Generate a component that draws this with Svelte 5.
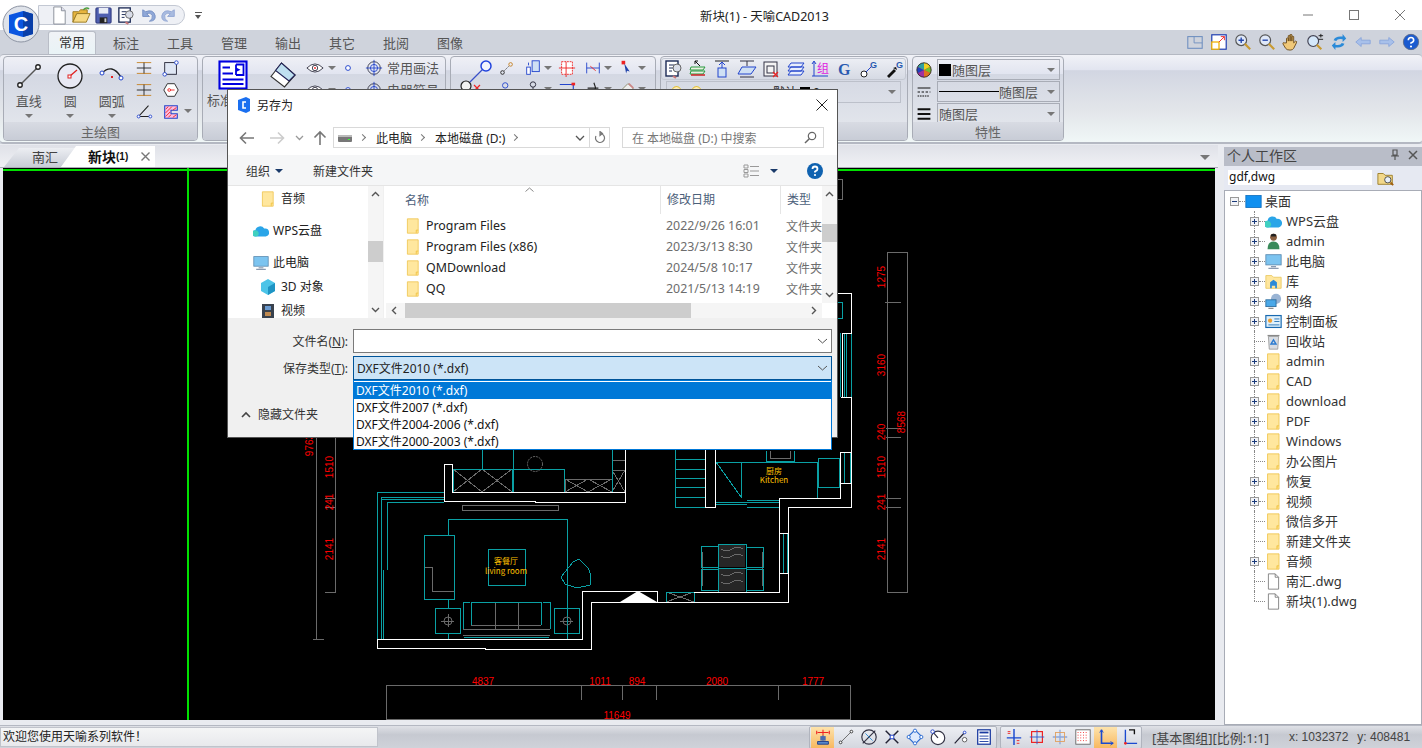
<script lang="ts">
  const icons: Record<string, string> = {
    doc: '<path d="M4 1h8l4 4v14H4z" fill="#fff" stroke="#8a8f9a"/><path d="M12 1v4h4" fill="#dde" stroke="#8a8f9a"/>',
    open: '<path d="M1 6h6l2-2h7v4H5L1 17z" fill="#e8b53e" stroke="#9a7a24"/><path d="M5 8h14l-4 9H1z" fill="#f7d983" stroke="#9a7a24"/><path d="M12 4q3-3 6-1" fill="none" stroke="#4a9e3f" stroke-width="1.5"/>',
    save: '<rect x="2" y="2" width="16" height="16" rx="1" fill="#4f5fb0" stroke="#2a3478"/><rect x="5" y="2" width="10" height="6" fill="#e8ecf6"/><rect x="6" y="12" width="8" height="6" fill="#222"/><rect x="11" y="13" width="2" height="4" fill="#ccc"/>',
    preview: '<rect x="3" y="2" width="12" height="15" fill="#fff" stroke="#1c2a55" stroke-width="1.4"/><path d="M6 6h5M6 9h5M6 12h3" stroke="#1c2a55"/><circle cx="14" cy="9" r="4" fill="#d9dde8" stroke="#666"/><path d="M10 17l3 2" stroke="#c77" stroke-width="2"/>',
    undo: '<path d="M5 4v7h7l-3-3q4-2 6 2 1 4-3 6 7 0 6-6-2-7-10-4z" fill="#8fa8d8" stroke="#7790c4"/>',
    redo: '<path d="M15 4v7H8l3-3q-4-2-6 2-1 4 3 6-7 0-6-6 2-7 10-4z" fill="#a8bbe0" stroke="#93a8d4"/>',
    wheel: '<circle cx="10" cy="10" r="9" fill="#e03030"/><path d="M10 10V1a9 9 0 0 1 8 5z" fill="#f0d020"/><path d="M10 10L18 6a9 9 0 0 1 0 8z" fill="#70c030"/><path d="M10 10l8 4a9 9 0 0 1-8 5z" fill="#e07020"/><path d="M10 10v9a9 9 0 0 1-8-5z" fill="#a030a0"/><path d="M10 10L2 14a9 9 0 0 1 0-8z" fill="#2040c0"/><path d="M10 10L2 6a9 9 0 0 1 8-5z" fill="#30a0a0"/><circle cx="10" cy="10" r="9" fill="none" stroke="#222"/>',
    linetype: '<path d="M2 5h16M2 10h3m2 0h3m2 0h3m2 0h1M2 15h2m1 0h2m1 0h2m1 0h2m1 0h2" stroke="#111" stroke-width="1.4" fill="none"/>',
    lineweight: '<path d="M2 4h16M2 10h16M2 16h16" stroke="#111" stroke-width="2.4" fill="none"/>',
    line: '<path d="M4 16L16 4" stroke="#555" stroke-width=".9"/><circle cx="4" cy="16" r="1.500" fill="#fff" stroke="#222" stroke-width=".9"/><circle cx="16" cy="4" r="1.500" fill="#fff" stroke="#222" stroke-width=".9"/>',
    bigblue: '<rect x="1" y="1" width="18" height="18" fill="#fff" stroke="#0000e0" stroke-width="1.4"/><path d="M3 5h5M3 9h7M3 13h14M3 16h14M12 3v7M12 3h5v7h-5" stroke="#0000e0" stroke-width="1.2" fill="none"/><path d="M12 5l3 1.5-3 1.5z" fill="#0000e0"/>',
    band: '<path d="M2 11l7-9 9 8-7 8z" fill="#fff" stroke="#333" stroke-width=".8"/><path d="M5 7l4-5 9 8-4 4z" fill="#bfe0f0" stroke="#225" stroke-width=".8"/>',
    eye: '<path d="M1 10q9-9 18 0-9 9-18 0z" fill="#fff" stroke="#334"/><circle cx="10" cy="10" r="3" fill="none" stroke="#334"/><circle cx="10" cy="10" r="1" fill="#e22"/>',
    dot: '<circle cx="10" cy="10" r="3" fill="#fff" stroke="#2244cc" stroke-width="1.2"/>',
    target: '<circle cx="10" cy="10" r="7" fill="none" stroke="#334"/><circle cx="10" cy="10" r="4" fill="none" stroke="#2244cc"/><path d="M1 10h18M10 1v18" stroke="#2244cc"/>',
    dimh: '<path d="M2 4h16M2 16h16" stroke="#c58020" stroke-width="1"/><path d="M2 10h16M10 4v12" stroke="#222"/>',
    rectn: '<rect x="3" y="4" width="13" height="13" fill="#dfe6f4" stroke="#223"/><circle cx="16" cy="4" r="2" fill="#fff" stroke="#2244cc"/><circle cx="3" cy="17" r="2" fill="#fff" stroke="#2244cc"/>',
    hex: '<path d="M6 3h8l4 7-4 7H6l-4-7z" fill="#fff" stroke="#222"/><circle cx="8" cy="10" r="1.5" fill="none" stroke="#e22"/><path d="M9 10h5" stroke="#e22"/>',
    angle: '<path d="M15 3L4 15h13" fill="none" stroke="#222" stroke-width="1.2"/><circle cx="4" cy="15" r="1.6" fill="#fff" stroke="#2244cc"/><circle cx="17" cy="15" r="1.6" fill="#fff" stroke="#2244cc"/>',
    hatch: '<path d="M3 3h14v5h-7v4h7v5H3z" fill="#fbd" stroke="#2244cc" stroke-width="1.2"/><path d="M4 7l3-3M4 11l7-7M4 15l5-5M7 16l3-3M12 16l4-3M12 8l4-3" stroke="#e22"/>',
    seg: '<circle cx="5" cy="15" r="2" fill="none" stroke="#222"/><path d="M7 13l5-5" stroke="#555" stroke-dasharray="2 1"/><circle cx="14" cy="6" r="2" fill="none" stroke="#c58020"/>',
    boxes: '<rect x="9" y="2" width="8" height="12" fill="#cfe0f4" stroke="#2244cc"/><rect x="3" y="9" width="4" height="8" fill="#fff" stroke="#2244cc"/><path d="M5 4v3" stroke="#2244cc"/>',
    redbox: '<rect x="4" y="3" width="12" height="14" fill="#fff" stroke="#e22" stroke-dasharray="2 1"/><path d="M1 10h18M9 3v17" stroke="#e22"/>',
    hdim: '<path d="M3 4v12M17 4v12M3 10h14" stroke="#2244cc"/><path d="M7 8l6 5" stroke="#e22"/>',
    pen: '<rect x="4" y="2" width="4" height="4" fill="#e22"/><path d="M7 5l6 9-3-1-1 3z" fill="#2244aa"/>',
    person: '<circle cx="8" cy="6" r="3" fill="none" stroke="#2244cc"/><path d="M4 17v-6h8v6M14 11v6" stroke="#2244cc" fill="none"/>',
    nodes: '<circle cx="10" cy="5" r="3" fill="none" stroke="#223"/><circle cx="4" cy="15" r="3" fill="none" stroke="#2244cc"/><circle cx="16" cy="15" r="3" fill="none" stroke="#2244cc"/><path d="M10 8v4M4 12h12" stroke="#223"/>',
    corner: '<path d="M2 5h15v12" fill="none" stroke="#2244cc" stroke-width="1.300"/><rect x="15" y="3" width="4" height="3" fill="#e22"/>',
    pick: '<path d="M11 3l2 6-4 8M4 9h12" fill="none" stroke="#222" stroke-width="1.300"/>',
    erase: '<path d="M3 12l8-8 6 5-8 8z" fill="#eee" stroke="#886"/><path d="M12 4l5 5" stroke="#c88" stroke-width="2"/>',
    layer: '<path d="M7 2l5 5M7 2v3M7 2h3" stroke="#111"/><path d="M3 8l14 0-2 3H2zM3 12h14l-2 3H2z" fill="#e8f0e0" stroke="#2a9a40"/><path d="M3 16h14" stroke="#c22" stroke-width="1.4"/>',
    upbox: '<path d="M3 2h14" stroke="#222"/><path d="M10 3v6M7 6l3-3 3 3" fill="none" stroke="#2244cc"/><rect x="6" y="9" width="8" height="9" fill="#cfe0f4" stroke="#2244cc"/>',
    plate: '<path d="M3 2h14M10 2v5M3 18h14" stroke="#334"/><path d="M5 8h14l-5 7H1z" fill="#cfe0f4" stroke="#2244cc"/>',
    boxx: '<rect x="3" y="3" width="13" height="14" fill="#f4f4f4" stroke="#334"/><rect x="6" y="7" width="7" height="7" fill="none" stroke="#334"/><path d="M12 13l5 5m0-5l-5 5" stroke="#e22" stroke-width="1.2"/>',
    stack: '<path d="M5 4h13l-3 4H2zM5 8h13l-3 4H2zM5 12h13l-3 4H2z" fill="#e8eefc" stroke="#2244cc"/>',
    zu: '<path d="M4 17V3M2 5l2-3 2 3M2 17h16" stroke="#2244cc" fill="none"/><text x="7" y="14" font-size="12" fill="#e020e0" font-family="Noto Sans CJK SC">组</text>',
    g: '<text x="3" y="16" font-size="16" font-weight="700" fill="#2a5ab0" font-family="Liberation Serif">G</text>',
    gline: '<circle cx="5" cy="15" r="3" fill="#fff" stroke="#222"/><path d="M7 13l5-5" stroke="#2244cc"/><text x="11" y="9" font-size="9" font-weight="700" fill="#2a5ab0" font-family="Liberation Sans">G</text>',
    gdrop: '<path d="M3 17l7-7 2 2-7 7z" fill="#111"/><path d="M9 9l3-1 1 3z" fill="#111"/><text x="12" y="9" font-size="9" font-weight="700" fill="#2a5ab0" font-family="Liberation Sans">G</text>',
    layout: '<rect x="2" y="4" width="16" height="13" fill="none" stroke="#6f8fc0" stroke-width="1.2"/><path d="M9 4v7h9" fill="none" stroke="#6f8fc0"/>',
    fit: '<rect x="2" y="2" width="16" height="16" fill="#fff" stroke="#1a3ab0" stroke-width="1.3"/><rect x="2" y="10" width="8" height="8" fill="#fff" stroke="#f0b000" stroke-width="1.4"/><path d="M10 10l6-6M12 4h4v4" fill="none" stroke="#e22"/>',
    zoomin: '<circle cx="8" cy="8" r="6" fill="#dfe8f8" stroke="#555" stroke-width="1.3"/><path d="M5 8h6M8 5v6" stroke="#2244aa" stroke-width="1.5"/><path d="M12 12l6 6" stroke="#c89a30" stroke-width="2.4"/>',
    zoomout: '<circle cx="8" cy="8" r="6" fill="#dfe8f8" stroke="#555" stroke-width="1.3"/><path d="M5 8h6" stroke="#2244aa" stroke-width="1.5"/><path d="M12 12l6 6" stroke="#c89a30" stroke-width="2.4"/>',
    hand: '<path d="M5 11V6q1-1 2 0v3V3q1-1 2 0v6V2q1-1 2 0v7V4q1-1 2 0v7l2-2q2 0 1 2l-3 6q-1 2-4 2-4 0-5-2l-3-5q0-2 2-1z" fill="#f0c878" stroke="#6a4a1a"/>',
    zoompm: '<circle cx="8" cy="9" r="6" fill="#d5e8fa" stroke="#445" stroke-width="1.3"/><path d="M12 13l5 5" stroke="#c89a30" stroke-width="2.4"/><path d="M14 3h5M16.500 1v4M14 7h5" stroke="#111"/>',
    refresh: '<path d="M4 8q2-5 10-4V1l4 5-4 4V7q-6-1-7 2z" fill="#2a8ad8"/><path d="M16 12q-2 5-10 4v3l-4-5 4-4v3q6 1 7-2z" fill="#2a8ad8"/>',
    left: '<path d="M2 10l6-5v3h10v4H8v3z" fill="#a8c0ea" stroke="#8aa6dc"/>',
    right: '<path d="M18 10l-6-5v3H2v4h10v3z" fill="#a8c0ea" stroke="#8aa6dc"/>',
    help: '<circle cx="10" cy="10" r="8.500" fill="#1a5ad0" stroke="#5a6a8a"/><path d="M7 8q0-3 3-3t3 3q0 2-3 3v1" fill="none" stroke="#fff" stroke-width="1.8"/><circle cx="10" cy="15" r="1.200" fill="#fff"/>',
    folderfind: '<path d="M1 5h6l2 2h8v10H1z" fill="#f2d88a" stroke="#9a7a24"/><circle cx="12" cy="12" r="3.500" fill="#e8f0fa" stroke="#444"/><path d="M15 15l3 3" stroke="#a06010" stroke-width="2"/>',
    folder: '<path d="M3 1h13.500v18H3z" fill="#ffe79e" stroke="#efc44c"/><path d="M14 19v-4h2.500" fill="#ffd864" stroke="#efc44c"/>',
    file: '<path d="M4 1h8l4 4v14H4z" fill="#fff" stroke="#777"/><path d="M12 1v4h4" fill="none" stroke="#777"/>',
    desktop: '<rect x="1" y="3" width="18" height="14" fill="#1090f0" stroke="#1070c0"/>',
    cloud: '<path d="M3 17a4 4 0 0 1 0-8 6 6 0 0 1 11-2 5 5 0 0 1 2 10z" fill="#2aa5e8"/><path d="M3 17a4 4 0 0 1 0-8q3 0 4 3 1 5-4 5z" fill="#40d0c0"/>',
    user: '<circle cx="10" cy="5" r="4" fill="#8a6040"/><path d="M7 2q3-2 6 0v2H7z" fill="#222"/><path d="M3 19q0-9 7-9t7 9z" fill="#3a8a5a"/>',
    pc: '<rect x="1" y="2" width="18" height="12" fill="#7cc4f0" stroke="#5a8ab0"/><path d="M7 16h6M4 18h12" stroke="#8a9ab0" stroke-width="1.4"/>',
    lib: '<path d="M1 3h7l2 2h9v13H1z" fill="#ffe79e" stroke="#e8c860"/><path d="M6 18v-7l4-3 4 3v7h-2v-3H8v3z" fill="#2a8ad8"/>',
    net: '<circle cx="13" cy="7" r="6" fill="#9ab4d4"/><rect x="1" y="8" width="12" height="8" fill="#4aa8e8" stroke="#2a6a9a"/><path d="M4 18h6" stroke="#555"/>',
    panel: '<rect x="1" y="3" width="18" height="14" fill="#dff0fb" stroke="#1a6ab0" stroke-width="1.4"/><circle cx="6" cy="9" r="2.500" fill="#f0a030"/><path d="M11 7h6M11 10h6M4 14h13" stroke="#1a6ab0"/>',
    bin: '<path d="M4 4h12l-1 15H5z" fill="#d8dce2" stroke="#999"/><path d="M3 3h14" stroke="#888" stroke-width="1.500"/><path d="M10 8l3 5H7z" fill="none" stroke="#2a7ad0" stroke-width="1.600"/>',
    stMark: '<path d="M10 2v6M4 5h12M3 3v4M17 3v4" stroke="#e22" stroke-width="1.200"/><path d="M10 8v6M4 15h12v3H4z" fill="#5a88c8" stroke="#1a3a8a"/><rect x="7" y="9" width="6" height="5" fill="#4a6ab0"/>',
    stPolar: '<circle cx="10" cy="10" r="8" fill="none" stroke="#334" stroke-width="1.300"/><path d="M3 17L17 3" stroke="#334" stroke-width="1.300"/><path d="M6 6l8 8" stroke="#2a8ad8"/>',
    stCross: '<path d="M3 3l14 14M17 3L3 17" stroke="#223" stroke-width="1.600"/><rect x="8" y="8" width="4" height="4" fill="#fff" stroke="#2244cc"/>',
    stDiamond: '<path d="M10 2l8 8-8 8-8-8z" fill="#dfeafc" stroke="#2a6ad0" stroke-width="1.200"/><circle cx="10" cy="3" r="1.800" fill="#fff" stroke="#2a6ad0"/><circle cx="17" cy="10" r="1.800" fill="#fff" stroke="#2a6ad0"/><circle cx="10" cy="17" r="1.800" fill="#fff" stroke="#2a6ad0"/><circle cx="3" cy="10" r="1.800" fill="#fff" stroke="#2a6ad0"/>',
    stClock: '<circle cx="10" cy="11" r="7.500" fill="#fff" stroke="#334" stroke-width="1.300"/><path d="M3 3l7 8" stroke="#334" stroke-width="1.300"/><circle cx="4" cy="4" r="2" fill="#fff" stroke="#2244cc"/>',
    stNode: '<path d="M3 17L14 5" stroke="#223" stroke-width="1.300"/><circle cx="14" cy="13" r="2.500" fill="#fff" stroke="#555"/><circle cx="14" cy="5" r="1.500" fill="#fff" stroke="#2244cc"/>',
    stForm: '<rect x="3" y="2" width="14" height="16" fill="#fff" stroke="#1a3aa0" stroke-width="1.400"/><rect x="5" y="4" width="10" height="2" fill="#1a3aa0"/><path d="M5 9h10M5 12h10M5 15h10" stroke="#1a3aa0"/>',
    st12: '<path d="M10 1v18M2 11h16" stroke="#1a4ad0" stroke-width="1.600"/><path d="M3 4h3M3 6h3M13 14h3M13 17h3" stroke="#e22"/>',
    stGrid: '<rect x="4" y="4" width="12" height="12" fill="none" stroke="#e22" stroke-width="1.300"/><path d="M10 2v16M2 10h16" stroke="#2a5ad0"/>',
    stFaint: '<path d="M10 2v16M2 10h16" stroke="#8aa6dc" stroke-width="1.400"/><rect x="5" y="5" width="10" height="10" fill="none" stroke="#e0a060"/>',
    stDots: '<rect x="2" y="2" width="16" height="16" fill="#fff" stroke="#666"/><path d="M4 5h12M4 8h12M4 11h12M4 14h12" stroke="#e22" stroke-dasharray="1 2"/>',
    stOrtho: '<path d="M5 2v15h13" fill="none" stroke="#1a4ad0" stroke-width="1.800"/><path d="M3 5l2-3 2 3M15 15l3 2-3 2" fill="none" stroke="#1a4ad0"/>',
    stOrthoX: '<path d="M6 2v15h13" fill="none" stroke="#1a4ad0" stroke-width="1.500"/><path d="M10 2h6v5" fill="none" stroke="#111" stroke-width="1.500"/><circle cx="6" cy="17" r="1.500" fill="#e22"/>'
  };

  const drawColA = ['dimh', 'dimh', 'angle'];
  const drawColB = ['rectn', 'hex', 'hatch'];
  const editRows = [
    [['seg', false], ['boxes', true], ['redbox', false], ['hdim', true], ['pen', true]],
    [['person', false], ['nodes', true], ['corner', false], ['pick', true], ['erase', true]]
  ] as [string, boolean][][];
  const propIcons = ['preview', 'layer', 'upbox', 'plate', 'boxx', 'stack', 'zu', 'g', 'gline', 'gdrop'];
  const viewIcons = ['layout', 'fit', 'zoomin', 'zoomout', 'hand', 'zoompm', 'refresh', 'left', 'right', 'help'];
  const ribbonTabs = ['常用', '标注', '工具', '管理', '输出', '其它', '批阅', '图像'];
  const quick = ['doc', 'open', 'save', 'preview', 'undo', 'redo'];
  const statusA = ['stMark', 'line', 'stPolar', 'stCross', 'stDiamond', 'stClock', 'stNode', 'stForm'];
  const statusB = ['st12', 'stGrid', 'stFaint', 'stDots', 'stOrtho', 'stOrthoX'];

  const treeRows = [
    { label: 'WPS云盘', icon: 'cloud', exp: true },
    { label: 'admin', icon: 'user', exp: true },
    { label: '此电脑', icon: 'pc', exp: true },
    { label: '库', icon: 'lib', exp: true },
    { label: '网络', icon: 'net', exp: true },
    { label: '控制面板', icon: 'panel', exp: true },
    { label: '回收站', icon: 'bin', exp: false },
    { label: 'admin', icon: 'folder', exp: true },
    { label: 'CAD', icon: 'folder', exp: true },
    { label: 'download', icon: 'folder', exp: true },
    { label: 'PDF', icon: 'folder', exp: true },
    { label: 'Windows', icon: 'folder', exp: true },
    { label: '办公图片', icon: 'folder', exp: false },
    { label: '恢复', icon: 'folder', exp: true },
    { label: '视频', icon: 'folder', exp: true },
    { label: '微信多开', icon: 'folder', exp: false },
    { label: '新建文件夹', icon: 'folder', exp: false },
    { label: '音频', icon: 'folder', exp: true },
    { label: '南汇.dwg', icon: 'file', exp: false },
    { label: '新块(1).dwg', icon: 'file', exp: false }
  ];

  const fileRows = [
    { name: 'Program Files', date: '2022/9/26 16:01' },
    { name: 'Program Files (x86)', date: '2023/3/13 8:30' },
    { name: 'QMDownload', date: '2024/5/8 10:17' },
    { name: 'QQ', date: '2021/5/13 14:19' }
  ];

  const saveTypes = ['DXF文件2010 (*.dxf)', 'DXF文件2007 (*.dxf)', 'DXF文件2004-2006 (*.dxf)', 'DXF文件2000-2003 (*.dxf)'];

  // plan geometry, in page coordinates (the svg viewBox starts where the canvas does)
  const walls = 'M444 464H452V492H625V450M444 464V501H535V502H625V492M377 639H582V591H657M377 639V648H485V649H591V602H620M657 591V602H620M657 602H694M694 592H779V573H788V602H694M779 573V533H788V573M779 533V498H840V483H851V397H841M851 397V507H788V533M840 483V452H851M851 293V333H842M837 293H851M705 450V507H715V450M842 397V333';
  const teal = 'M377 492H444M377 492V639H447M381 497H444M381 499H444M381 497V639M383 570V639M387 502H444M387 502V570M447 639H567V519H448V535M424 535H454V599H424ZM448 599V608M435 608H460V633H435ZM554 608H579V633H554ZM448 633V639M567 633V639M488 549H525V585H488ZM471 602H541V625M471 602V625M463 602H470M463 602V629M543 602H550V629M464 637H549M579 559L588 568L591 575L590 585L577 588L565 584L561 577L573 562ZM453 492V469H512V492M513 450V492M482 450V469M513 469H564V492M612 450V492M625 450V492M675 450V507H705M675 459H705M675 469H705M675 478H705M675 487H705M675 497H705M715 462H817V498M741 462V498M716 462L741 497M715 502H779M715 504H747M747 500H779M747 507H779M818 458H839V487H818ZM844 452V483M850 452V483M844 333V397M846 333V397M851 333V397M840 333V397M837 302H842V318H837M718 544H746V592H718ZM718 568H746M701 546H718V567H701ZM701 569H718V590H701ZM746 547H763V567H746ZM746 569H763V590H746ZM666 592H694V602H666ZM779 533V573M783 533V573M787 533V573M766 451V461H794V451';
  const grey = 'M424 567H432V591H454M471 625H541M471 629H541M495 602V629M518 602V629M463 629H550M463 635H550M462 505H558V510H462ZM453 469L482 492M482 469L453 492M482 469L512 492M512 469L482 492M565 479H612V492H565ZM565 479L588 492M588 479L565 492M588 479L612 492M612 479L588 492M612 460H625M612 470H625M612 470L625 492M625 470L612 492M666 592L694 602M694 592L666 602M386 685H850V719H386ZM581 685V700M622 685V700M656 685V700M778 685V700M316 437V639M313 639H324M335 437V592H325M325 437H335M325 498H335M325 507H335M887 252V592H907V252H887M885 302H901M886 428H901M886 437H901M886 498H901M886 507H901M837 179H842V199H837M702 552V586M762 552V586M441 621H454M448 614V627M560 621H573M567 614V627M770 451V458H790V451M721 549Q727 553 732 549T743 549M721 556Q727 560 732 556T743 556M721 574Q727 578 732 574T743 574M721 582Q727 586 732 582T743 582';
  const dimTexts = [
    { t: '4837', x: 483, y: 685 }, { t: '1011', x: 600, y: 685 }, { t: '894', x: 637, y: 685 },
    { t: '2080', x: 717, y: 685 }, { t: '1777', x: 813, y: 685 }, { t: '11649', x: 617, y: 719 }
  ];
  const dimTextsV = [
    { t: '9763', x: 313, y: 445 }, { t: '1510', x: 333, y: 467 }, { t: '241', x: 333, y: 502 }, { t: '2141', x: 333, y: 549 },
    { t: '1275', x: 885, y: 277 }, { t: '3160', x: 885, y: 365 }, { t: '240', x: 885, y: 432 }, { t: '8568', x: 905, y: 422 },
    { t: '1510', x: 885, y: 467 }, { t: '241', x: 885, y: 502 }, { t: '2141', x: 885, y: 549 }
  ];
</script>

{#snippet ico(name: string, size = 20)}
  <svg class="ico" width={size} height={size} viewBox="0 0 20 20">{@html icons[name]}</svg>
{/snippet}

<div class="app">
  <header class="titlebar">
    <svg class="logo" width="38" height="38" viewBox="0 0 38 38">
      <circle cx="19" cy="19" r="18" fill="#dfe3ea" stroke="#8d94a3" />
      <path d="M7 10l14-4 10 3v20l-10 3-14-4z" fill="#0a55e0" />
      <path d="M21 6l10 3v20l-10 3z" fill="#0a3fa8" />
      <text x="19" y="26" text-anchor="middle" class="logo-c">C</text>
    </svg>
    <div class="quick">
      {#each quick as q}
        <span class="quick-item">{@render ico(q, 19)}</span>
      {/each}
    </div>
    <span class="quick-more"></span>
    <div class="app-title">新块(1) - 天喻CAD2013</div>
    <div class="win-btns">
      <svg width="12" height="12" viewBox="0 0 12 12"><path d="M1 6h10" stroke="#777" /></svg>
      <svg width="12" height="12" viewBox="0 0 12 12"><rect x="1.500" y="1.500" width="9" height="9" fill="none" stroke="#777" /></svg>
      <svg width="12" height="12" viewBox="0 0 12 12"><path d="M1 1l10 10M11 1L1 11" stroke="#777" /></svg>
    </div>
  </header>

  <nav class="tabs">
    {#each ribbonTabs as tab, i}
      <div class="tab" class:active={i === 0}>{tab}</div>
    {/each}
    <div class="view-tools">
      {#each viewIcons as v}
        <span class="view-tool">{@render ico(v, 18)}</span>
      {/each}
    </div>
  </nav>

  <section class="ribbon">
    <div class="group g-draw">
      <div class="group-body">
        <div class="big-btn">{@render ico('line', 30)}<span>直线</span><i class="tri"></i></div>
        <div class="big-btn">
          <svg class="ico" width="30" height="30" viewBox="0 0 30 30">
            <circle cx="15" cy="15" r="12" fill="#e8e9f4" stroke="#222" stroke-width="1.300" />
            <path d="M15 15l7-6" stroke="#e02020" stroke-width="1.300" />
            <rect x="13" y="14" width="3" height="3" fill="#fff" stroke="#e02020" />
          </svg>
          <span>圆</span><i class="tri"></i>
        </div>
        <div class="big-btn">
          <svg class="ico" width="30" height="30" viewBox="0 0 30 30">
            <path d="M5 12q10-10 19 4" fill="none" stroke="#222" stroke-width="1.300" />
            <circle cx="5" cy="12" r="2" fill="#fff" stroke="#2244cc" />
            <circle cx="24" cy="17" r="2" fill="#fff" stroke="#2244cc" />
            <rect x="14" y="15" width="2" height="2" fill="#e02020" />
          </svg>
          <span>圆弧</span><i class="tri"></i>
        </div>
        <div class="small-col first">
          {#each drawColA as a}<span>{@render ico(a, 18)}</span>{/each}
        </div>
        <div class="small-col">
          {#each drawColB as b}<span>{@render ico(b, 18)}</span>{/each}
        </div>
        <i class="tri side-tri"></i>
      </div>
      <div class="group-label">主绘图</div>
    </div>

    <div class="group g-std">
      <div class="group-body">
        <div class="big-btn std">{@render ico('bigblue', 30)}<span>标准图框</span></div>
        <div class="big-btn band">{@render ico('band', 30)}</div>
        <div class="std-rows">
          {#each ['常用画法', '电器符号'] as label}
            <div class="std-row">
              {@render ico('eye', 18)}<i class="tri"></i>{@render ico('dot', 16)}<b class="spacer"></b>{@render ico('target', 18)}<span>{label}</span>
            </div>
          {/each}
        </div>
      </div>
      <div class="group-label"></div>
    </div>

    <div class="group g-edit">
      <div class="group-body">
        <div class="edit-big">
          <svg width="34" height="34" viewBox="0 0 34 34">
            <circle cx="6" cy="27" r="5" fill="#f2f2f2" stroke="#222" stroke-width="1.200" />
            <path d="M10 23L24 9" stroke="#3a50c8" stroke-width="1.300" />
            <circle cx="26" cy="7" r="5" fill="#f2f4fc" stroke="#2244dd" stroke-width="1.500" />
            <path d="M14 26l6 6m0-6l-6 6" stroke="#e22" stroke-width="1.200" />
          </svg>
        </div>
        <div class="edit-grid">
          {#each editRows as row}
            <div class="edit-row">
              {#each row as [name, arrow]}
                <span class="edit-cell" class:wide={arrow}>{@render ico(name, 18)}{#if arrow}<i class="tri"></i>{/if}</span>
              {/each}
            </div>
          {/each}
        </div>
      </div>
      <div class="group-label"></div>
    </div>

    <div class="group g-prop">
      <div class="group-body prop-col">
        <div class="prop-bar">
          {#each propIcons as p}<span>{@render ico(p, 20)}</span>{/each}
        </div>
        <div class="layer-combo">
          <span class="bulb"></span><span class="bulb key"></span>
          <span class="layer-name">默认</span><b class="swatch"></b><span>0</span>
          <i class="tri"></i>
        </div>
      </div>
      <div class="group-label"></div>
    </div>

    <div class="group g-attr">
      <div class="group-body attr-col">
        <div class="attr-row">{@render ico('wheel', 16)}<div class="combo"><b class="swatch big"></b>随图层<i class="tri"></i></div></div>
        <div class="attr-row">{@render ico('linetype', 16)}<div class="combo"><span class="rule"></span>随图层<i class="tri"></i></div></div>
        <div class="attr-row">{@render ico('lineweight', 16)}<div class="combo">随图层<i class="tri"></i></div></div>
      </div>
      <div class="group-label">特性</div>
    </div>
  </section>

  <main class="work">
    <div class="doc">
      <div class="doc-tabs">
        <div class="doc-tab">南汇</div>
        <div class="doc-tab current">
          新块<small>(1)</small>
          <svg class="doc-x" width="9" height="9" viewBox="0 0 9 9"><path d="M.5.500l8 8M8.500.500l-8 8" stroke="#777" stroke-width="1.400" /></svg>
        </div>
        <i class="doc-more"></i>
      </div>
      <div class="canvas">
        <svg class="plan" viewBox="3 168 1212 552" width="1212" height="552">
          <g shape-rendering="crispEdges">
            <path d="M3 170H1215M188 168V720" stroke="#00e000" stroke-width="2" fill="none" />
            <rect x="719" y="545" width="26" height="22" fill="#262626" />
            <rect x="719" y="569" width="26" height="22" fill="#262626" />
            <path d={grey} stroke="#6a6a6a" fill="none" />
            <path d={teal} stroke="#0aa0a4" fill="none" />
            <path d={walls} stroke="#fff" fill="none" />
          </g>
          <path d="M620 602L638 591L657 602Z" fill="#fff" />
          <circle cx="535" cy="464" r="7.500" fill="none" stroke="#6a6a6a" stroke-dasharray="2 1" />
          <circle cx="448" cy="621" r="4" fill="none" stroke="#6a6a6a" />
          <circle cx="567" cy="621" r="4" fill="none" stroke="#6a6a6a" />
          {#each dimTexts as d}
            <text x={d.x} y={d.y} class="dim" text-anchor="middle">{d.t}</text>
          {/each}
          {#each dimTextsV as d}
            <text x={d.x} y={d.y} class="dim" text-anchor="middle" transform="rotate(-90 {d.x} {d.y})">{d.t}</text>
          {/each}
          <text x="506" y="564" class="room" text-anchor="middle">客餐厅</text>
          <text x="506" y="574" class="room" text-anchor="middle">living room</text>
          <text x="774" y="474" class="room" text-anchor="middle">厨房</text>
          <text x="774" y="483" class="room" text-anchor="middle">Kitchen</text>
        </svg>
      </div>
    </div>

    <aside class="side">
      <div class="side-head">
        <span>个人工作区</span>
        <div class="side-btns">
          <svg width="12" height="12" viewBox="0 0 12 12"><path d="M4 1h4v5H4zM2 7h8M6 7v4" fill="none" stroke="#555" stroke-width="1.200" /></svg>
          <svg width="12" height="12" viewBox="0 0 12 12"><path d="M2 2l8 8M10 2l-8 8" stroke="#555" stroke-width="1.500" /></svg>
        </div>
      </div>
      <div class="side-search">
        <div class="side-input">gdf,dwg</div>
        {@render ico('folderfind', 18)}
      </div>
      <div class="tree">
        <div class="tree-root">
          <span class="exp minus"></span><span class="dots"></span>
          {@render ico('desktop', 17)}
          <span>桌面</span>
        </div>
        {#each treeRows as row, i}
          <div class="tree-row" class:last={i === treeRows.length - 1}>
            {#if row.exp}<span class="exp"></span>{:else}<span class="exp none"></span>{/if}
            <span class="dots"></span>
            <span class="tree-ico">{@render ico(row.icon, 17)}</span>
            <span>{row.label}</span>
          </div>
        {/each}
      </div>
    </aside>
  </main>

  <footer class="status">
    <div class="status-msg">欢迎您使用天喻系列软件！</div>
    <div class="status-group s-a">
      {#each statusA as s, i}
        <span class="status-btn" class:on={i === 0}>{@render ico(s, 18)}</span>
      {/each}
    </div>
    <div class="status-group">
      {#each statusB as s, i}
        <span class="status-btn" class:on={i === 4}>{@render ico(s, 18)}</span>
      {/each}
    </div>
    <div class="status-scale">[基本图组][比例:1:1]</div>
    <div class="status-xy"><span>x: 1032372</span><span>y: 408481</span></div>
  </footer>

  <div class="dialog">
    <div class="dlg-title">
      <svg width="14" height="16" viewBox="0 0 14 16">
        <path d="M1 3l8-3 4 2v12l-4 2-8-3z" fill="#1a6ff0" />
        <path d="M9 5H6v6h3" fill="none" stroke="#fff" stroke-width="1.600" />
      </svg>
      <span>另存为</span>
      <svg class="dlg-close" width="12" height="12" viewBox="0 0 12 12"><path d="M.5.500l11 11M11.500.500l-11 11" stroke="#222" /></svg>
    </div>

    <div class="dlg-nav">
      <svg width="16" height="14" viewBox="0 0 16 14"><path d="M15 7H2M7 1.500L1.500 7 7 12.500" fill="none" stroke="#777" stroke-width="1.600" /></svg>
      <svg class="fwd" width="16" height="14" viewBox="0 0 16 14"><path d="M1 7h13M9 1.500L14.500 7 9 12.500" fill="none" stroke="#ccc" stroke-width="1.600" /></svg>
      <svg class="drop" width="9" height="6" viewBox="0 0 9 6"><path d="M1 1l3.500 3.500L8 1" fill="none" stroke="#999" stroke-width="1.300" /></svg>
      <svg class="up" width="14" height="16" viewBox="0 0 14 16"><path d="M7 15V2M1.500 7.500L7 2l5.500 5.500" fill="none" stroke="#777" stroke-width="1.600" /></svg>
      <div class="address">
        <svg width="16" height="10" viewBox="0 0 16 10"><rect x="1" y="2" width="14" height="7" rx="1" fill="#777" /><rect x="1" y="2" width="14" height="2" fill="#bbb" /><rect x="11" y="6" width="2" height="1" fill="#3f3" /></svg>
        <i class="crumb"></i><span>此电脑</span><i class="crumb"></i><span>本地磁盘 (D:)</span><i class="crumb"></i>
        <svg class="addr-down" width="10" height="6" viewBox="0 0 10 6"><path d="M1 1l4 4 4-4" fill="none" stroke="#555" stroke-width="1.300" /></svg>
        <div class="addr-refresh">
          <svg width="12" height="13" viewBox="0 0 12 13"><path d="M6 2.500a4.500 4.500 0 1 1-4 2.500M6 .500v4l2.500-2z" fill="none" stroke="#777" stroke-width="1.200" /></svg>
        </div>
      </div>
      <div class="dlg-search">
        <span>在 本地磁盘 (D:) 中搜索</span>
        <svg width="13" height="13" viewBox="0 0 13 13"><circle cx="8" cy="5" r="3.700" fill="none" stroke="#666" stroke-width="1.200" /><path d="M5.300 7.700L1 12" stroke="#666" stroke-width="1.500" /></svg>
      </div>
    </div>

    <div class="dlg-bar">
      <span class="org">组织</span><i class="dark-tri"></i>
      <span class="newdir">新建文件夹</span>
      <div class="bar-right">
        <svg width="17" height="14" viewBox="0 0 17 14"><path d="M1 1h4v3H1zM1 5.500h4v3H1zM1 10h4v3H1z" fill="none" stroke="#999" /><path d="M7 2.500h9M7 7h9M7 11.500h9" stroke="#999" /></svg>
        <i class="dark-tri"></i>
        <svg class="dlg-help" width="16" height="16" viewBox="0 0 16 16"><circle cx="8" cy="8" r="8" fill="#0f62b0" /><path d="M5.500 6q0-2.500 2.500-2.500T10.500 6Q10.500 7.500 8 8.500v1" fill="none" stroke="#fff" stroke-width="1.800" /><circle cx="8" cy="12" r="1.100" fill="#fff" /></svg>
      </div>
    </div>

    <div class="dlg-lists">
      <div class="places">
        <div class="place-list">
          <div class="place sub">{@render ico('folder', 16)}<span>音频</span></div>
          <div class="place gap">{@render ico('cloud', 16)}<span>WPS云盘</span></div>
          <div class="place gap">{@render ico('pc', 16)}<span>此电脑</span></div>
          <div class="place sub">
            <svg width="16" height="16" viewBox="0 0 16 16"><path d="M8 0l7 4v8l-7 4-7-4V4z" fill="#4cc4e8" /><path d="M8 8l7-4v8l-7 4z" fill="#1e94c4" /></svg>
            <span>3D 对象</span>
          </div>
          <div class="place sub">
            <svg width="16" height="16" viewBox="0 0 16 16"><rect x="2" y="1" width="12" height="14" fill="#39424e" /><rect x="5" y="3" width="6" height="4" fill="#6a9ad0" /><rect x="5" y="9" width="6" height="4" fill="#c08a50" /></svg>
            <span>视频</span>
          </div>
        </div>
        <div class="vscroll short">
          <svg width="9" height="6" viewBox="0 0 9 6"><path d="M1 5l3.500-3.500L8 5" fill="none" stroke="#555" stroke-width="1.400" /></svg>
          <div class="thumb"></div>
          <svg width="9" height="6" viewBox="0 0 9 6"><path d="M1 1l3.500 3.500L8 1" fill="none" stroke="#555" stroke-width="1.400" /></svg>
        </div>
      </div>

      <div class="files">
        <div class="files-main">
          <div class="files-view">
            <div class="file-head">
              <svg class="sort" width="9" height="5" viewBox="0 0 9 5"><path d="M.5 4.500L4.500 1l4 3.500" fill="none" stroke="#888" /></svg>
              <span class="col-name">名称</span>
              <span class="col-date">修改日期</span>
              <span class="col-type">类型</span>
            </div>
            {#each fileRows as f}
              <div class="file-row">
                <span class="col-name file-name">{@render ico('folder', 16)}{f.name}</span>
                <span class="col-date">{f.date}</span>
                <span class="col-type">文件夹</span>
              </div>
            {/each}
          </div>
          <div class="vscroll">
            <svg width="9" height="6" viewBox="0 0 9 6"><path d="M1 5l3.500-3.500L8 5" fill="none" stroke="#555" stroke-width="1.400" /></svg>
            <div class="thumb file-thumb"></div>
            <svg width="9" height="6" viewBox="0 0 9 6"><path d="M1 1l3.500 3.500L8 1" fill="none" stroke="#555" stroke-width="1.400" /></svg>
          </div>
        </div>
        <div class="hscroll">
          <svg width="6" height="9" viewBox="0 0 6 9"><path d="M5 1L1.500 4.500 5 8" fill="none" stroke="#555" stroke-width="1.400" /></svg>
          <div class="hthumb"></div>
          <svg width="6" height="9" viewBox="0 0 6 9"><path d="M1 1l3.500 3.500L1 8" fill="none" stroke="#555" stroke-width="1.400" /></svg>
        </div>
      </div>
    </div>

    <div class="dlg-form">
      <div class="form-row">
        <label>文件名(<u>N</u>):</label>
        <div class="field">
          <svg width="11" height="6" viewBox="0 0 11 6"><path d="M1 1l4.500 4L10 1" fill="none" stroke="#555" /></svg>
        </div>
      </div>
      <div class="form-row">
        <label>保存类型(<u>T</u>):</label>
        <div class="field picked">
          <span>{saveTypes[0]}</span>
          <svg width="11" height="6" viewBox="0 0 11 6"><path d="M1 1l4.500 4L10 1" fill="none" stroke="#555" /></svg>
        </div>
      </div>
      <div class="hide-folders">
        <svg width="10" height="7" viewBox="0 0 10 7"><path d="M1 6l4-4 4 4" fill="none" stroke="#444" stroke-width="1.600" /></svg>
        <span>隐藏文件夹</span>
      </div>
    </div>

    <ul class="type-menu">
      {#each saveTypes as t, i}
        <li class:sel={i === 0}>{t}</li>
      {/each}
    </ul>
  </div>
</div>

<style>
  :global(body) {
    margin: 0;
    background: #cfd3dc;
  }

  .app {
    position: relative;
    width: 1422px;
    height: 748px;
    display: flex;
    flex-direction: column;
    overflow: hidden;
    font-family: "Noto Sans", "Noto Sans CJK SC", sans-serif;
    font-size: 13px;
    color: #222;
  }

  .ico {
    display: block;
    flex: none;
  }

  .tri {
    display: inline-block;
    flex: none;
    width: 0;
    height: 0;
    border: 4px solid transparent;
    border-top: 4px solid #777;
    border-bottom: 0;
  }

  /* title bar */
  .titlebar {
    height: 30px;
    background: #fff;
    display: flex;
    align-items: center;
    flex: none;
  }

  .logo {
    position: absolute;
    left: 2px;
    top: 5px;
    z-index: 2;
  }

  .logo-c {
    font: 700 20px "Liberation Sans", sans-serif;
    fill: #fff;
  }

  .quick {
    margin-left: 38px;
    width: 147px;
    height: 20px;
    box-sizing: border-box;
    padding-left: 11px;
    display: flex;
    align-items: center;
    gap: 3px;
    background: #eef0f5;
    border: 1px solid #c3c8d3;
    border-radius: 0 11px 11px 0;
  }

  .quick-more {
    width: 7px;
    height: 6px;
    margin-left: 10px;
    border-top: 1px solid #555;
    position: relative;
  }

  .quick-more::after {
    content: "";
    position: absolute;
    top: 2px;
    left: 0;
    border: 3.500px solid transparent;
    border-top: 4px solid #555;
    border-bottom: 0;
  }

  .app-title {
    margin-left: 498px;
    font-size: 12.500px;
    color: #222;
    white-space: nowrap;
  }

  .win-btns {
    margin-left: auto;
    display: flex;
    gap: 34px;
    padding-right: 16px;
  }

  /* ribbon tabs */
  .tabs {
    height: 24px;
    flex: none;
    display: flex;
    align-items: flex-end;
    padding-left: 48px;
    gap: 6px;
    background: #cfd3dc;
  }

  .tab {
    width: 48px;
    height: 21px;
    text-align: center;
    line-height: 21px;
    color: #555;
    font-size: 13px;
  }

  .tab.active {
    background: linear-gradient(#f0f2f6, #e9f3f6);
    border: 1px solid #b9bdc7;
    border-bottom: 0;
    border-radius: 3px 3px 0 0;
    box-sizing: border-box;
    height: 23px;
    color: #333;
  }

  .view-tools {
    margin-left: auto;
    align-self: center;
    display: flex;
    gap: 6px;
    padding-right: 2px;
  }

  .view-tool {
    width: 18px;
  }

  /* ribbon body */
  .ribbon {
    height: 90px;
    flex: none;
    box-sizing: border-box;
    padding: 1px 0 0 3px;
    display: flex;
    gap: 4px;
    border: 1px solid #b4b8c2;
    border-width: 1px 0 2px;
    border-radius: 4px;
    background: linear-gradient(#f1f2f7 0, #e2e5f0 17%, #d2d6e2 18%, #e3e6ea 65%, #f0f7f7 100%);
  }

  .group {
    height: 85px;
    box-sizing: border-box;
    border: 1px solid #a8acb6;
    border-radius: 4px;
    display: flex;
    flex-direction: column;
    overflow: hidden;
    background: linear-gradient(#eff0f6 0, #e2e5f0 20%, #d4d8e3 21%, #e6e9ee 100%);
  }

  .group-body {
    flex: 1;
    display: flex;
    min-height: 0;
  }

  .group-label {
    height: 18px;
    flex: none;
    text-align: center;
    line-height: 20px;
    font-size: 13px;
    color: #666;
    background: linear-gradient(#d8dbe3, #c8ccd6);
  }

  .g-draw {
    width: 195px;
  }

  .g-draw .group-body {
    padding: 1px 0 0 4px;
    position: relative;
  }

  .big-btn {
    width: 41.500px;
    display: flex;
    flex-direction: column;
    align-items: center;
    color: #555;
    font-size: 13px;
    line-height: 16px;
    padding-top: 3px;
    white-space: nowrap;
  }

  .big-btn span {
    margin-top: 2px;
  }

  .big-btn .tri {
    margin-top: 5px;
  }

  .small-col {
    width: 27px;
    display: flex;
    flex-direction: column;
    align-items: center;
    gap: 4px;
    padding-top: 1px;
  }

  .small-col.first {
    margin-left: -2px;
  }

  .side-tri {
    position: absolute;
    right: 5px;
    top: 52px;
  }

  .g-std {
    width: 244px;
  }

  .g-std .group-body {
    padding: 0 0 0 4px;
  }

  .big-btn.std {
    width: 52px;
  }

  .big-btn.band {
    width: 47px;
  }

  .std-row {
    height: 21px;
    display: flex;
    align-items: center;
    gap: 4px;
    color: #555;
    margin-bottom: 1px;
    white-space: nowrap;
  }

  .spacer {
    width: 1px;
  }

  .g-edit {
    width: 206px;
  }

  .edit-big {
    width: 34px;
    margin-left: 9px;
    padding-top: 2px;
  }

  .edit-grid {
    display: flex;
    flex-direction: column;
    padding: 1px 0 0 4px;
  }

  .edit-row {
    display: flex;
    margin-bottom: 1px;
  }

  .edit-cell {
    width: 26px;
    height: 20px;
    display: flex;
    align-items: center;
  }

  .edit-cell.wide {
    width: 34px;
    gap: 2px;
  }

  .g-prop {
    width: 248px;
  }

  .prop-col {
    flex-direction: column;
    padding: 1px 1px 0 0;
  }

  .prop-bar {
    height: 20px;
    display: flex;
    gap: 2px;
    border: 1px solid #c4c8d2;
    border-radius: 3px;
    background: linear-gradient(#eceef4, #d6dae4);
  }

  .prop-bar span {
    width: 22.500px;
    display: flex;
    justify-content: center;
  }

  .layer-combo {
    height: 20px;
    margin: 1px 5px;
    border: 1px solid #bcc0ca;
    display: flex;
    align-items: center;
    padding: 0 4px;
    gap: 3px;
    font-size: 12px;
  }

  .bulb {
    width: 9px;
    height: 11px;
    border: 1.500px solid #e3c23c;
    border-radius: 50%;
    background: #ffeebb;
    margin-right: 6px;
  }

  .layer-name {
    margin-left: 62px;
  }

  .swatch {
    display: inline-block;
    width: 10px;
    height: 10px;
    background: #000;
  }

  .layer-combo .tri {
    margin-left: auto;
  }

  .g-attr {
    width: 152px;
  }

  .attr-col {
    flex-direction: column;
    padding: 2px 3px 0 3px;
    gap: 1px;
  }

  .attr-row {
    display: flex;
    align-items: center;
    gap: 5px;
    height: 21px;
  }

  .combo {
    flex: 1;
    box-sizing: border-box;
    height: 21px;
    border: 1px solid #a8acb6;
    display: flex;
    align-items: center;
    font-size: 13px;
    color: #555;
    padding-left: 1px;
  }

  .combo .tri {
    margin-left: auto;
    margin-right: 4px;
  }

  .swatch.big {
    width: 12px;
    height: 12px;
    margin-right: 1px;
  }

  .rule {
    width: 60px;
    border-top: 1px solid #000;
  }

  /* document area */
  .work {
    flex: 1;
    display: flex;
    min-height: 0;
    background: #e9ebf0;
  }

  .doc {
    width: 1218px;
    padding-top: 1px;
    display: flex;
    flex-direction: column;
  }

  .doc-tabs {
    height: 23px;
    flex: none;
    display: flex;
    align-items: flex-end;
    padding-left: 4px;
    background: linear-gradient(#dfe1e8, #f0f1f4);
    border-bottom: 1px solid #a8acb6;
    box-sizing: border-box;
  }

  .doc-tab {
    height: 19px;
    padding: 0 17px 0 28px;
    line-height: 18px;
    color: #444;
    font-size: 13px;
    clip-path: polygon(15px 0, 100% 0, calc(100% - 14px) 100%, 0 100%);
    background: linear-gradient(#eceef2, #c8ccd6);
  }

  .doc-tab.current {
    margin-left: -14px;
    padding: 0 5px 0 27px;
    height: 21px;
    line-height: 20px;
    background: #fff;
    color: #111;
    font-size: 14px;
    font-weight: 700;
    display: flex;
    align-items: center;
    white-space: nowrap;
    clip-path: polygon(15px 0, 100% 0, 100% 100%, 0 100%);
  }

  .doc-tab small {
    font: 700 10px "Liberation Sans", sans-serif;
  }

  .doc-x {
    margin-left: 13px;
  }

  .doc-more {
    margin: 0 8px 7px auto;
    border: 5px solid transparent;
    border-top: 5px solid #777;
    border-bottom: 0;
  }

  .canvas {
    margin-left: 3px;
    width: 1212px;
    height: 552px;
    background: #000;
    flex: none;
  }

  .plan {
    display: block;
  }

  .dim {
    font: 10px "Liberation Sans", sans-serif;
    fill: #ff0000;
  }

  .room {
    font: 8px "Noto Sans CJK SC", sans-serif;
    fill: #ffc000;
  }

  /* personal workspace */
  .side {
    margin: 3px 0 0 6px;
    width: 198px;
    display: flex;
    flex-direction: column;
  }

  .side-head {
    height: 19px;
    flex: none;
    box-sizing: border-box;
    background: #b9bdc8;
    display: flex;
    align-items: center;
    padding: 0 3px 3px;
    color: #444;
    font-size: 14px;
  }

  .side-btns {
    margin-left: auto;
    display: flex;
    gap: 6px;
  }

  .side-search {
    height: 24px;
    flex: none;
    box-sizing: border-box;
    background: #e6e9f2;
    display: flex;
    align-items: center;
    padding: 0 0 1px 4px;
    gap: 5px;
  }

  .side-input {
    width: 144px;
    height: 15px;
    background: #fff;
    font-size: 12px;
    line-height: 14px;
    padding-left: 1px;
    box-sizing: border-box;
    color: #111;
  }

  .tree {
    flex: 1;
    background: #fff;
    border: 1px solid #a8acb6;
    color: #333;
  }

  .tree-root,
  .tree-row {
    height: 20px;
    display: flex;
    align-items: center;
    position: relative;
    font-size: 13px;
    line-height: 18px;
    white-space: nowrap;
  }

  .tree-root {
    padding-left: 5px;
  }

  .tree-root > span:last-child {
    margin-left: 3px;
  }

  .tree-row {
    padding-left: 25px;
  }

  .tree-row::before {
    content: "";
    position: absolute;
    left: 29px;
    top: 0;
    bottom: 0;
    border-left: 1px dotted #888;
  }

  .tree-row.last::before {
    bottom: 10px;
  }

  .exp {
    width: 9px;
    height: 9px;
    flex: none;
    box-sizing: border-box;
    border: 1px solid #999;
    background: linear-gradient(#1a3a7a, #1a3a7a) center / 5px 1px no-repeat,
      linear-gradient(#1a3a7a, #1a3a7a) center / 1px 5px no-repeat,
      #f2f3f6;
    position: relative;
    z-index: 1;
  }

  .exp.minus {
    background: linear-gradient(#1a3a7a, #1a3a7a) center / 5px 1px no-repeat, #f2f3f6;
  }

  .exp.none {
    border: 0;
    background: none;
  }

  .dots {
    width: 6px;
    flex: none;
    border-top: 1px dotted #888;
  }

  .tree-row .exp.none + .dots {
    width: 11px;
    margin-left: -5px;
  }

  .tree-ico {
    width: 21px;
    flex: none;
  }

  /* status bar */
  .status {
    height: 23px;
    flex: none;
    display: flex;
    align-items: center;
    background: linear-gradient(#dfe1e7, #c6c9d1 40%, #cfd2d9);
    border-top: 1px solid #b4b8c2;
    box-sizing: border-box;
  }

  .status-msg {
    width: 378px;
    height: 20px;
    line-height: 18px;
    padding-left: 2px;
    background: linear-gradient(#f4f5f6, #e8e9ec);
    border: 1px solid #c0c3cb;
    box-sizing: border-box;
    font-size: 12px;
    color: #222;
  }

  .status-group {
    display: flex;
    height: 21px;
    margin-left: 3px;
    padding: 0 1px;
    border: 1px solid #b0b4be;
    border-radius: 2px;
    background: linear-gradient(#eceef3, #d4d7df);
  }

  .status-group.s-a {
    margin-left: 431px;
  }

  .status-btn {
    width: 23px;
    display: flex;
    align-items: center;
    justify-content: center;
  }

  .status-btn.on {
    background: linear-gradient(#fde3ac, #f8b860);
  }

  .status-scale {
    margin-left: 10px;
    font-size: 13px;
    color: #444;
    white-space: nowrap;
  }

  .status-xy {
    margin-left: 20px;
    display: flex;
    gap: 9px;
    font: 12px "Liberation Sans", sans-serif;
    color: #444;
  }

  /* save dialog */
  .dialog {
    position: absolute;
    left: 228px;
    top: 90px;
    width: 609px;
    height: 347px;
    background: #fff;
    display: flex;
    flex-direction: column;
    box-shadow: 0 0 0 1px #555;
    font-size: 12px;
    z-index: 5;
  }

  .dlg-title {
    height: 30px;
    flex: none;
    display: flex;
    align-items: center;
    padding-left: 9px;
    gap: 6px;
  }

  .dlg-close {
    margin-left: auto;
    margin-right: 9px;
  }

  .dlg-nav {
    height: 35px;
    flex: none;
    display: flex;
    align-items: center;
    padding-left: 11px;
  }

  .fwd {
    margin-left: 14px;
  }

  .drop {
    margin-left: 10px;
  }

  .up {
    margin-left: 9px;
  }

  .address {
    margin-left: 6px;
    width: 277px;
    height: 21px;
    box-sizing: border-box;
    border: 1px solid #d9d9d9;
    display: flex;
    align-items: center;
    padding-left: 3px;
  }

  .crumb {
    width: 4px;
    height: 4px;
    margin: 0 11px 0 7px;
    border: solid #777;
    border-width: 1px 1px 0 0;
    transform: rotate(45deg);
    flex: none;
  }

  .addr-down {
    margin-left: auto;
    margin-right: 4px;
  }

  .addr-refresh {
    width: 19px;
    height: 100%;
    border-left: 1px solid #d9d9d9;
    display: flex;
    align-items: center;
    justify-content: center;
  }

  .dlg-search {
    margin-left: 12px;
    width: 202px;
    height: 21px;
    box-sizing: border-box;
    border: 1px solid #d9d9d9;
    display: flex;
    align-items: center;
    padding: 0 6px 0 9px;
    color: #777;
  }

  .dlg-search svg {
    margin-left: auto;
  }

  .dlg-bar {
    height: 31px;
    flex: none;
    background: #f5f6f7;
    border-bottom: 1px solid #e5e5e5;
    box-sizing: border-box;
    display: flex;
    align-items: center;
    padding: 1px 0 0 18px;
    color: #333;
  }

  .org {
    margin-right: 5px;
  }

  .dark-tri {
    border: 4px solid transparent;
    border-top: 4px solid #1a3a6a;
    border-bottom: 0;
  }

  .newdir {
    margin-left: 30px;
  }

  .bar-right {
    margin-left: auto;
    display: flex;
    align-items: center;
    padding-right: 14px;
  }

  .bar-right .dark-tri {
    margin-left: 10px;
  }

  .dlg-help {
    margin-left: 29px;
  }

  .dlg-lists {
    height: 132px;
    flex: none;
    display: flex;
  }

  .places {
    width: 155px;
    flex: none;
    display: flex;
    border-right: 1px solid #f0f0f0;
    box-sizing: content-box;
  }

  .place-list {
    flex: 1;
    padding-top: 1px;
    overflow: hidden;
  }

  .place {
    height: 24px;
    display: flex;
    align-items: center;
    gap: 4px;
    padding-left: 25px;
    color: #222;
    line-height: 14px;
  }

  .place.sub {
    padding-left: 32px;
    gap: 5px;
  }

  .place.gap {
    margin-top: 8px;
  }

  .vscroll {
    width: 15px;
    flex: none;
    display: flex;
    flex-direction: column;
    align-items: center;
    justify-content: space-between;
    padding: 5px 0;
    box-sizing: border-box;
    position: relative;
    background: #f5f5f5;
  }

  .thumb {
    position: absolute;
    left: 0;
    top: 55px;
    width: 100%;
    height: 21px;
    background: #cdcdcd;
  }

  .file-thumb {
    top: 38px;
    height: 18px;
  }

  .files {
    flex: 1;
    min-width: 0;
    margin-left: 2px;
    display: flex;
    flex-direction: column;
  }

  .files-main {
    flex: 1;
    display: flex;
    min-height: 0;
  }

  .files-view {
    flex: 1;
    min-width: 0;
    overflow: hidden;
  }

  .file-head {
    height: 28px;
    display: flex;
    align-items: center;
    position: relative;
    color: #4c607a;
  }

  .sort {
    position: absolute;
    left: 139px;
    top: 1px;
  }

  .col-name {
    width: 274px;
    padding-left: 19px;
    box-sizing: border-box;
    flex: none;
  }

  .col-date {
    width: 120px;
    flex: none;
    padding-left: 6px;
    box-sizing: border-box;
    color: #6d6d6d;
  }

  .col-type {
    padding-left: 6px;
    white-space: nowrap;
    color: #6d6d6d;
  }

  .file-head .col-date,
  .file-head .col-type {
    border-left: 1px solid #e5e5e5;
    height: 100%;
    line-height: 28px;
    color: #4c607a;
  }

  .file-row {
    height: 21px;
    display: flex;
    align-items: center;
    font-size: 12.400px;
  }

  .file-row .col-type {
    font-size: 12px;
  }

  .file-row:nth-child(2) {
    margin-top: 1px;
  }

  .file-name {
    display: flex;
    align-items: center;
    gap: 5px;
    color: #222;
  }

  .hscroll {
    height: 15px;
    flex: none;
    width: 436px;
    background: #f5f5f5;
    display: flex;
    align-items: center;
    padding: 0 5px;
    box-sizing: border-box;
  }

  .hthumb {
    width: 286px;
    height: 100%;
    margin-left: 8px;
    margin-right: auto;
    background: #cdcdcd;
  }

  .dlg-form {
    flex: 1;
    background: #f0f0f0;
    padding-top: 11px;
  }

  .form-row {
    display: flex;
    align-items: center;
    height: 24px;
    margin-bottom: 3px;
  }

  .form-row label {
    width: 125px;
    padding-right: 5px;
    box-sizing: border-box;
    text-align: right;
    color: #333;
    white-space: nowrap;
  }

  .field {
    width: 479px;
    height: 24px;
    box-sizing: border-box;
    background: #fff;
    border: 1px solid #7a7a7a;
    display: flex;
    align-items: center;
    padding: 0 3px;
  }

  .field svg {
    margin-left: auto;
  }

  .field.picked {
    background: #cce4f7;
    border-color: #005499;
  }

  .hide-folders {
    display: flex;
    align-items: center;
    gap: 7px;
    padding-left: 13px;
    margin-top: 25px;
    color: #333;
  }

  .type-menu {
    position: absolute;
    left: 125px;
    top: 290px;
    width: 479px;
    margin: 0;
    padding: 1px 0 0;
    box-sizing: border-box;
    height: 70px;
    list-style: none;
    background: #fff;
    border: 1px solid #0078d7;
    z-index: 1;
  }

  .type-menu li {
    height: 17px;
    line-height: 17px;
    padding-left: 2px;
    color: #111;
  }

  .type-menu li.sel {
    background: #0078d7;
    color: #fff;
  }
</style>
